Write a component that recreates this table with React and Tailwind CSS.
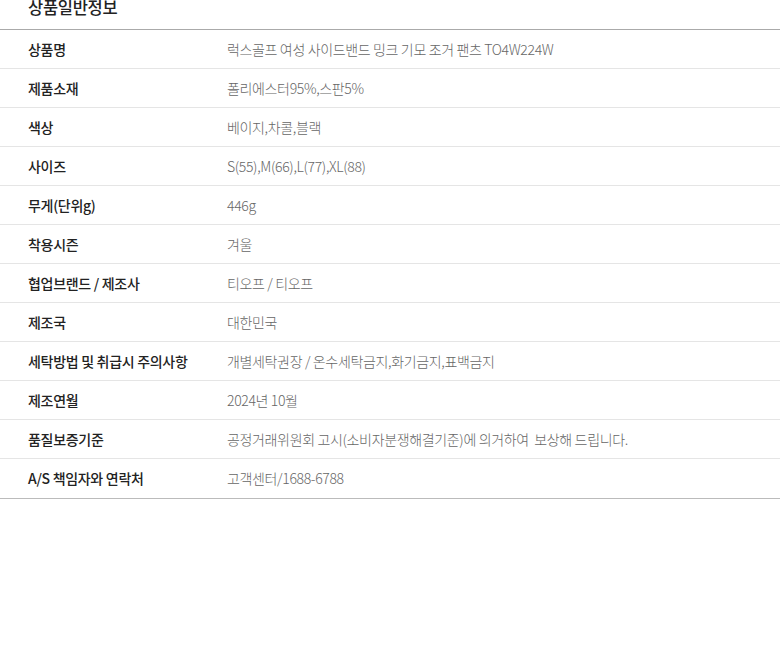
import React from "react";

const rows = [
  ["상품명", "럭스골프 여성 사이드밴드 밍크 기모 조거 팬츠 TO4W224W"],
  ["제품소재", "폴리에스터95%,스판5%"],
  ["색상", "베이지,차콜,블랙"],
  ["사이즈", "S(55),M(66),L(77),XL(88)"],
  ["무게(단위g)", "446g"],
  ["착용시즌", "겨울"],
  ["협업브랜드 / 제조사", "티오프 / 티오프"],
  ["제조국", "대한민국"],
  ["세탁방법 및 취급시 주의사항", "개별세탁권장 / 온수세탁금지,화기금지,표백금지"],
  ["제조연월", "2024년 10월"],
  ["품질보증기준", "공정거래위원회 고시(소비자분쟁해결기준)에 의거하여  보상해 드립니다."],
  ["A/S 책임자와 연락처", "고객센터/1688-6788"],
];

export default function App() {
  return (
    <div
      className="w-[780px] h-[653px] bg-white overflow-hidden"
      style={{ fontFamily: '"Noto Sans CJK KR", "Noto Sans", sans-serif' }}
    >
      <div className="h-[29px] flex items-end pb-[10px] pl-[28px]">
        <div className="text-[16.5px] leading-[24px] font-medium text-[#222] tracking-[-0.3px]">상품일반정보</div>
      </div>
      <div className="border-t border-[#aaaaaa] border-b border-b-[#bbbbbb]">
        {rows.map(([k, v], i) => (
          <div
            key={i}
            className={
              "h-[39px] flex items-center pl-[28px] text-[14px] " +
              (i < rows.length - 1 ? "border-b border-[#e5e5e5]" : "")
            }
          >
            <div className="w-[199px] shrink-0 text-[#222] font-medium tracking-[-0.3px]">{k}</div>
            <div className="text-[#666] font-light tracking-[-0.35px] whitespace-pre">{v}</div>
          </div>
        ))}
      </div>
    </div>
  );
}
